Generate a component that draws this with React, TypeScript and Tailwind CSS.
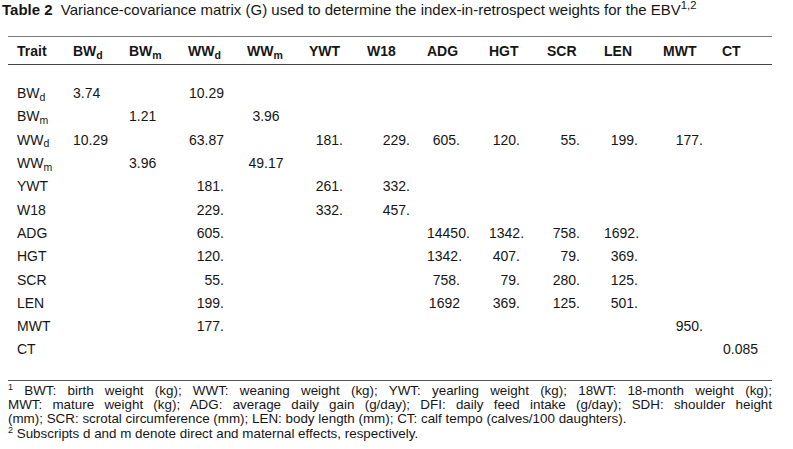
import React from "react";

type Cell = string | null;

// column widths (px) starting at x=8, total 764
const headers: React.ReactNode[] = [
  "Trait",
  <>BW<sub>d</sub></>,
  <>BW<sub>m</sub></>,
  <>WW<sub>d</sub></>,
  <>WW<sub>m</sub></>,
  "YWT",
  "W18",
  "ADG",
  "HGT",
  "SCR",
  "LEN",
  "MWT",
  "CT",
];

// body cell alignment per column
const colClass = [
  "pl-[9px]",
  "text-left",
  "text-left",
  "text-right pr-[23px]",
  "text-center pr-[24px]",
  "text-right pr-[24px]",
  "text-right pr-[17px]",
  "text-right pr-[29px]",
  "text-right pr-[27px]",
  "text-right pr-[24px]",
  "text-right pr-[25px]",
  "text-right pr-[19px]",
  "text-left pl-[1px]",
];

const rows: { label: React.ReactNode; cells: Cell[] }[] = [
  { label: <>BW<sub>d</sub></>, cells: ["3.74", null, "10.29", null, null, null, null, null, null, null, null, null] },
  { label: <>BW<sub>m</sub></>, cells: [null, "1.21", null, "3.96", null, null, null, null, null, null, null, null] },
  { label: <>WW<sub>d</sub></>, cells: ["10.29", null, "63.87", null, "181.", "229.", "605.", "120.", "55.", "199.", "177.", null] },
  { label: <>WW<sub>m</sub></>, cells: [null, "3.96", null, "49.17", null, null, null, null, null, null, null, null] },
  { label: "YWT", cells: [null, null, "181.", null, "261.", "332.", null, null, null, null, null, null] },
  { label: "W18", cells: [null, null, "229.", null, "332.", "457.", null, null, null, null, null, null] },
  { label: "ADG", cells: [null, null, "605.", null, null, null, "14450.", "1342.", "758.", "1692.", null, null] },
  { label: "HGT", cells: [null, null, "120.", null, null, null, "1342.", "407.", "79.", "369.", null, null] },
  { label: "SCR", cells: [null, null, "55.", null, null, null, "758.", "79.", "280.", "125.", null, null] },
  { label: "LEN", cells: [null, null, "199.", null, null, null, "1692", "369.", "125.", "501.", null, null] },
  { label: "MWT", cells: [null, null, "177.", null, null, null, null, null, null, null, "950.", null] },
  { label: "CT", cells: [null, null, null, null, null, null, null, null, null, null, null, "0.085"] },
];

const grid =
  "grid grid-cols-[65px_56px_59px_59px_62px_58px_60px_62px_58px_57px_59px_59px_50px]";

export default function App() {
  return (
    <div className="h-[449px] w-[793px] overflow-hidden bg-white text-[#161616] font-['Liberation_Sans',Arial,sans-serif]">

      {/* Title */}

      <div className="pl-[2px] text-[15px] leading-[20px] whitespace-nowrap">
        <span className="font-bold">Table 2</span>
        {"  "}
        <span className="ml-[4px]">
          Variance-covariance matrix (G) used to determine the index-in-retrospect weights for the EBV
        </span>
        <sup>1,2</sup>
      </div>

      {/* Table */}

      <div className="ml-[8px] mt-[16px] w-[764px]">

        <div className={`${grid} h-[29px] items-center border-t border-b border-t-[#7a7a7a] border-b-[#444] pt-[2px] text-[14px] font-bold`}>
          {headers.map((h, i) => (
            <div key={i} className={i === 0 ? "pl-[9px]" : ""}>
              {h}
            </div>
          ))}
        </div>

        <div className="border-b border-[#555] pt-[17px] pb-[18px] text-[14px]">
          {rows.map((r, ri) => (
            <div key={ri} className={`${grid} h-[23.3px] items-center`}>
              <div className={colClass[0]}>{r.label}</div>
              {r.cells.map((c, ci) => (
                <div key={ci} className={colClass[ci + 1]}>
                  {c}
                </div>
              ))}
            </div>
          ))}
        </div>

        {/* Footnotes */}

        <div className="mt-[3px] text-[13.4px] leading-[14.4px]">
          <div className="text-justify [text-align-last:justify]">
            <sup className="text-[9px]">1</sup> BWT: birth weight (kg); WWT: weaning weight (kg); YWT: yearling weight (kg); 18WT: 18-month weight (kg);
          </div>
          <div className="text-justify [text-align-last:justify]">
            MWT: mature weight (kg); ADG: average daily gain (g/day); DFI: daily feed intake (g/day); SDH: shoulder height
          </div>
          <div className="whitespace-nowrap">
            (mm); SCR: scrotal circumference (mm); LEN: body length (mm); CT: calf tempo (calves/100 daughters).
          </div>
          <div>
            <sup className="text-[9px]">2</sup> Subscripts d and m denote direct and maternal effects, respectively.
          </div>
        </div>

      </div>

    </div>
  );
}
